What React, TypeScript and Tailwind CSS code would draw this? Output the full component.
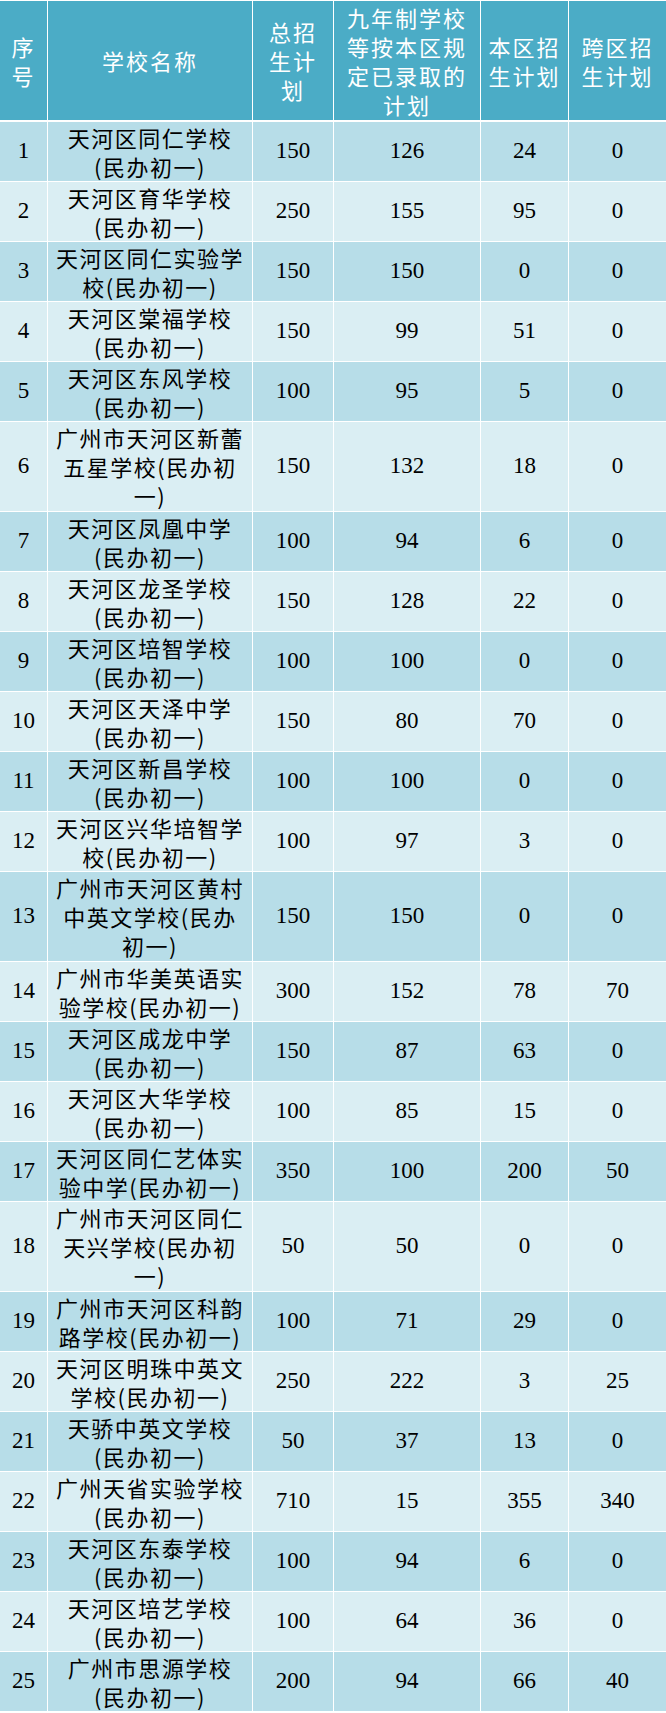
const HEADERS: string[][] = [
  ["序", "号"],
  ["学校名称"],
  ["总招", "生计", "划"],
  ["九年制学校", "等按本区规", "定已录取的", "计划"],
  ["本区招", "生计划"],
  ["跨区招", "生计划"],
];

type Row = [number, string[], number, number, number, number];

const ROWS: Row[] = [
  [1, ["天河区同仁学校", "(民办初一)"], 150, 126, 24, 0],
  [2, ["天河区育华学校", "(民办初一)"], 250, 155, 95, 0],
  [3, ["天河区同仁实验学", "校(民办初一)"], 150, 150, 0, 0],
  [4, ["天河区棠福学校", "(民办初一)"], 150, 99, 51, 0],
  [5, ["天河区东风学校", "(民办初一)"], 100, 95, 5, 0],
  [6, ["广州市天河区新蕾", "五星学校(民办初", "一)"], 150, 132, 18, 0],
  [7, ["天河区凤凰中学", "(民办初一)"], 100, 94, 6, 0],
  [8, ["天河区龙圣学校", "(民办初一)"], 150, 128, 22, 0],
  [9, ["天河区培智学校", "(民办初一)"], 100, 100, 0, 0],
  [10, ["天河区天泽中学", "(民办初一)"], 150, 80, 70, 0],
  [11, ["天河区新昌学校", "(民办初一)"], 100, 100, 0, 0],
  [12, ["天河区兴华培智学", "校(民办初一)"], 100, 97, 3, 0],
  [13, ["广州市天河区黄村", "中英文学校(民办", "初一)"], 150, 150, 0, 0],
  [14, ["广州市华美英语实", "验学校(民办初一)"], 300, 152, 78, 70],
  [15, ["天河区成龙中学", "(民办初一)"], 150, 87, 63, 0],
  [16, ["天河区大华学校", "(民办初一)"], 100, 85, 15, 0],
  [17, ["天河区同仁艺体实", "验中学(民办初一)"], 350, 100, 200, 50],
  [18, ["广州市天河区同仁", "天兴学校(民办初", "一)"], 50, 50, 0, 0],
  [19, ["广州市天河区科韵", "路学校(民办初一)"], 100, 71, 29, 0],
  [20, ["天河区明珠中英文", "学校(民办初一)"], 250, 222, 3, 25],
  [21, ["天骄中英文学校", "(民办初一)"], 50, 37, 13, 0],
  [22, ["广州天省实验学校", "(民办初一)"], 710, 15, 355, 340],
  [23, ["天河区东泰学校", "(民办初一)"], 100, 94, 6, 0],
  [24, ["天河区培艺学校", "(民办初一)"], 100, 64, 36, 0],
  [25, ["广州市思源学校", "(民办初一)"], 200, 94, 66, 40],
];

const NumCell = ({ value, bg }: { value: number; bg: string }) => (
  <div
    className={`${bg} flex items-center justify-center text-[23px] text-black font-['Liberation_Serif','Noto_Sans_CJK_SC',serif]`}
  >
    {value}
  </div>
);

export default function App() {
  return (
    <div className="w-[666px] bg-white pt-px pb-px">
      <div className="grid grid-cols-[47px_204px_80px_146px_87px_97px] gap-px">
        {HEADERS.map((lines, i) => (
          <div
            key={i}
            className="h-[119px] mb-px bg-[#4bacc6] flex flex-col items-center justify-center text-white text-[22px] leading-[29px] tracking-[2px] font-['Noto_Sans_CJK_SC',sans-serif]"
          >
            {lines.map((l) => (
              <span key={l}>{l}</span>
            ))}
          </div>
        ))}

        {ROWS.map(([no, name, total, nine, local, cross]) => {
          const bg = no % 2 === 1 ? "bg-[#b7dde8]" : "bg-[#daeef3]";
          const h = name.length === 3 ? "h-[89px]" : "h-[59px]";
          return [
            <NumCell key={`${no}-a`} value={no} bg={bg} />,
            <div
              key={`${no}-b`}
              className={`${bg} ${h} flex flex-col items-center justify-center text-black text-[22px] leading-[29px] tracking-[1.5px] font-['Noto_Sans_CJK_SC',sans-serif]`}
            >
              {name.map((l) => (
                <span key={l}>{l}</span>
              ))}
            </div>,
            <NumCell key={`${no}-c`} value={total} bg={bg} />,
            <NumCell key={`${no}-d`} value={nine} bg={bg} />,
            <NumCell key={`${no}-e`} value={local} bg={bg} />,
            <NumCell key={`${no}-f`} value={cross} bg={bg} />,
          ];
        })}
      </div>
    </div>
  );
}
